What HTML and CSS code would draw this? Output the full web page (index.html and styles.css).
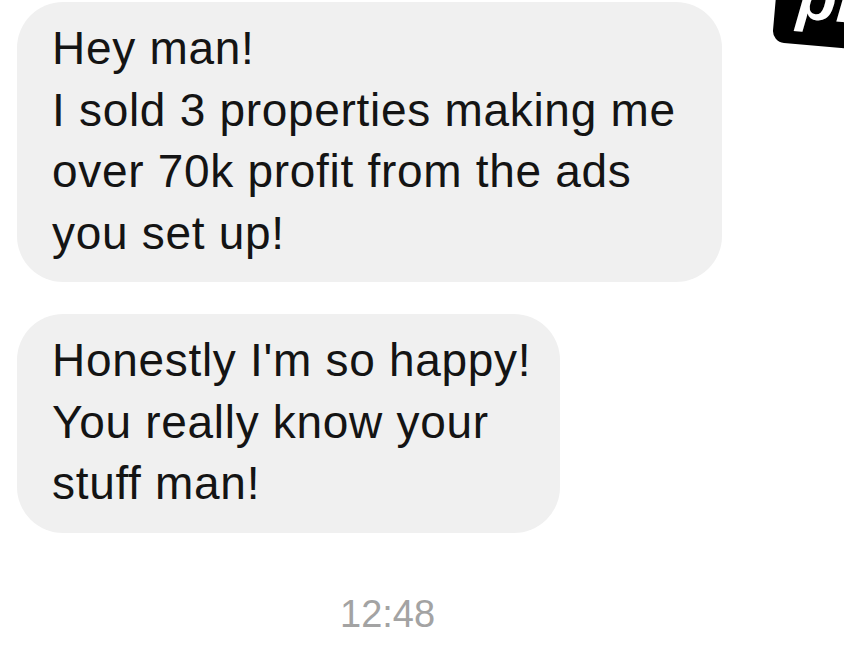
FILE: index.html
```html
<!DOCTYPE html>
<html>
<head>
<meta charset="utf-8">
<link rel="stylesheet" href="styles.css">
</head>
<body>
<div class="badge"><span class="badge-text">pr</span></div>
<main class="chat">
  <div class="bubble bubble-wide">Hey man!<br>I sold 3 properties making me<br>over 70k profit from the ads<br>you set up!</div>
  <div class="bubble">Honestly I'm so happy!<br>You really know your<br>stuff man!</div>
  <div class="time">12:48</div>
</main>
</body>
</html>
```
FILE: styles.css
```css
html, body {
  margin: 0;
  padding: 0;
  background: #ffffff;
  width: 844px;
  height: 667px;
  overflow: hidden;
}
body {
  position: relative;
  font-family: "Liberation Sans", Arial, sans-serif;
}
.chat {
  display: flex;
  flex-direction: column;
  align-items: flex-start;
  gap: 32px;
  padding: 2px 0 0 17px;
}
.bubble {
  background: #f0f0f0;
  color: #141414;
  font-size: 46px;
  letter-spacing: 0.7px;
  line-height: 61.5px;
  padding: 16px 29px 18px 35px;
  border-radius: 46px;
  white-space: nowrap;
}
.bubble-wide {
  width: 641px;
}
.time {
  margin-top: 27px;
  padding-left: 323px;
  font-size: 38px;
  line-height: 44px;
  color: #a3a3a3;
}
.badge {
  position: absolute;
  left: 772px;
  top: -40px;
  width: 120px;
  height: 82px;
  background: #000;
  border-radius: 12px;
  transform: rotate(5deg);
  transform-origin: left bottom;
  overflow: hidden;
}
.badge-text {
  position: absolute;
  left: 22px;
  top: 2px;
  color: #fff;
  font-family: "Liberation Sans", Arial, sans-serif;
  font-weight: bold;
  font-style: italic;
  font-size: 64px;
  line-height: 64px;
}
```
